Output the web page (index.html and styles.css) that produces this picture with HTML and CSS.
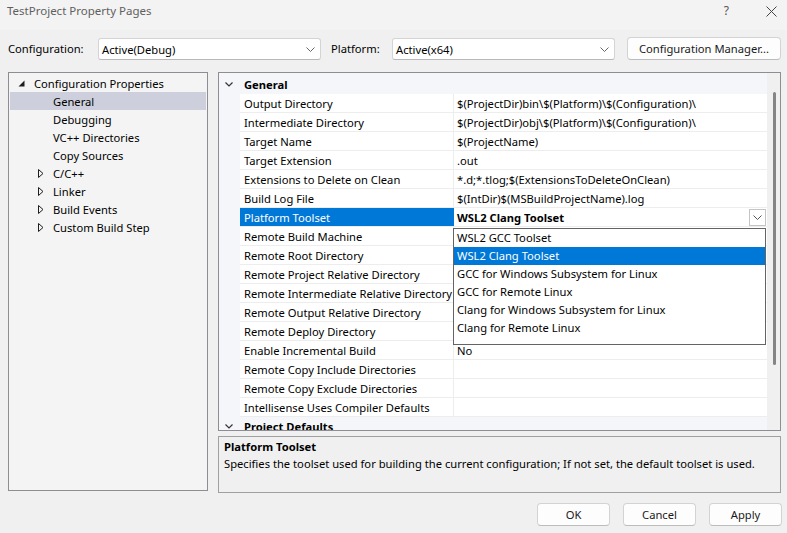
FILE: index.html
```html
<!DOCTYPE html>
<html lang="en">
<head>
    <meta charset="UTF-8">
    <title>TestProject Property Pages</title>
    <link rel="stylesheet" href="styles.css">
</head>
<body>
<div class="window">
    <div class="titlebar">
        <span class="title">TestProject Property Pages</span>
        <span class="caption-btn help">?</span>
        <span class="caption-btn close">
            <svg width="11" height="11" viewBox="0 0 11 11"><path d="M0.5 0.5 L10.5 10.5 M10.5 0.5 L0.5 10.5" stroke="#444" stroke-width="1" fill="none"/></svg>
        </span>
    </div>

    <div class="toolbar">
        <span class="field-label config-label">Configuration:</span>
        <div class="combo">
            <span>Active(Debug)</span>
            <svg class="chev" width="9" height="5" viewBox="0 0 9 5"><polyline points="0.5,0.5 4.5,4.5 8.5,0.5" stroke="#666" fill="none"/></svg>
        </div>
        <span class="field-label platform-label">Platform:</span>
        <div class="combo">
            <span>Active(x64)</span>
            <svg class="chev" width="9" height="5" viewBox="0 0 9 5"><polyline points="0.5,0.5 4.5,4.5 8.5,0.5" stroke="#666" fill="none"/></svg>
        </div>
        <button class="btn manager">Configuration Manager...</button>
    </div>

    <div class="main">
        <div class="tree">
            <div class="tree-row lvl0">
                <span class="twisty"><svg width="7" height="7" viewBox="0 0 7 7"><polygon points="6.5,0.5 6.5,6.5 0.5,6.5" fill="#1e1e1e"/></svg></span>
                <span>Configuration Properties</span>
            </div>
            <div class="tree-row lvl1 selected"><span class="twisty"></span><span>General</span></div>
            <div class="tree-row lvl1"><span class="twisty"></span><span>Debugging</span></div>
            <div class="tree-row lvl1"><span class="twisty"></span><span>VC++ Directories</span></div>
            <div class="tree-row lvl1"><span class="twisty"></span><span>Copy Sources</span></div>
            <div class="tree-row lvl1">
                <span class="twisty"><svg width="6" height="9" viewBox="0 0 6 9"><polygon points="0.5,0.5 5,4.5 0.5,8.5" stroke="#1e1e1e" fill="none"/></svg></span>
                <span>C/C++</span>
            </div>
            <div class="tree-row lvl1">
                <span class="twisty"><svg width="6" height="9" viewBox="0 0 6 9"><polygon points="0.5,0.5 5,4.5 0.5,8.5" stroke="#1e1e1e" fill="none"/></svg></span>
                <span>Linker</span>
            </div>
            <div class="tree-row lvl1">
                <span class="twisty"><svg width="6" height="9" viewBox="0 0 6 9"><polygon points="0.5,0.5 5,4.5 0.5,8.5" stroke="#1e1e1e" fill="none"/></svg></span>
                <span>Build Events</span>
            </div>
            <div class="tree-row lvl1">
                <span class="twisty"><svg width="6" height="9" viewBox="0 0 6 9"><polygon points="0.5,0.5 5,4.5 0.5,8.5" stroke="#1e1e1e" fill="none"/></svg></span>
                <span>Custom Build Step</span>
            </div>
        </div>

        <div class="right">
            <div class="grid">
                <div class="grid-rows">
                    <div class="cat">
                        <span class="cat-chev"><svg width="8" height="5" viewBox="0 0 8 5"><polyline points="0.5,0.5 4,4 7.5,0.5" stroke="#333" stroke-width="1.2" fill="none"/></svg></span>
                        <span>General</span>
                    </div>
                    <div class="row"><div class="name">Output Directory</div><div class="value">$(ProjectDir)bin\$(Platform)\$(Configuration)\</div></div>
                    <div class="row"><div class="name">Intermediate Directory</div><div class="value">$(ProjectDir)obj\$(Platform)\$(Configuration)\</div></div>
                    <div class="row"><div class="name">Target Name</div><div class="value">$(ProjectName)</div></div>
                    <div class="row"><div class="name">Target Extension</div><div class="value">.out</div></div>
                    <div class="row"><div class="name">Extensions to Delete on Clean</div><div class="value">*.d;*.tlog;$(ExtensionsToDeleteOnClean)</div></div>
                    <div class="row"><div class="name">Build Log File</div><div class="value">$(IntDir)$(MSBuildProjectName).log</div></div>
                    <div class="row active">
                        <div class="name">Platform Toolset</div>
                        <div class="value">
                            <span class="bold">WSL2 Clang Toolset</span>
                            <span class="drop-btn"><svg width="9" height="5" viewBox="0 0 9 5"><polyline points="0.5,0.5 4.5,4.5 8.5,0.5" stroke="#555" fill="none"/></svg></span>
                        </div>
                    </div>
                    <div class="row"><div class="name">Remote Build Machine</div><div class="value"></div></div>
                    <div class="row"><div class="name">Remote Root Directory</div><div class="value"></div></div>
                    <div class="row"><div class="name">Remote Project Relative Directory</div><div class="value"></div></div>
                    <div class="row"><div class="name">Remote Intermediate Relative Directory</div><div class="value"></div></div>
                    <div class="row"><div class="name">Remote Output Relative Directory</div><div class="value"></div></div>
                    <div class="row"><div class="name">Remote Deploy Directory</div><div class="value"></div></div>
                    <div class="row"><div class="name">Enable Incremental Build</div><div class="value">No</div></div>
                    <div class="row"><div class="name">Remote Copy Include Directories</div><div class="value"></div></div>
                    <div class="row"><div class="name">Remote Copy Exclude Directories</div><div class="value"></div></div>
                    <div class="row"><div class="name">Intellisense Uses Compiler Defaults</div><div class="value"></div></div>
                    <div class="cat">
                        <span class="cat-chev"><svg width="8" height="5" viewBox="0 0 8 5"><polyline points="0.5,0.5 4,4 7.5,0.5" stroke="#333" stroke-width="1.2" fill="none"/></svg></span>
                        <span>Project Defaults</span>
                    </div>
                </div>
                <div class="scrollbar"><div class="thumb"></div></div>

                <!-- open list of the Platform Toolset combo -->
                <div class="dropdown">
                    <div class="item">WSL2 GCC Toolset</div>
                    <div class="item picked">WSL2 Clang Toolset</div>
                    <div class="item">GCC for Windows Subsystem for Linux</div>
                    <div class="item">GCC for Remote Linux</div>
                    <div class="item">Clang for Windows Subsystem for Linux</div>
                    <div class="item">Clang for Remote Linux</div>
                </div>
            </div>
            <div class="desc">
                <div class="desc-title">Platform Toolset</div>
                <div>Specifies the toolset used for building the current configuration; If not set, the default toolset is used.</div>
            </div>
        </div>
    </div>

    <div class="footer">
        <button class="btn">OK</button>
        <button class="btn">Cancel</button>
        <button class="btn">Apply</button>
    </div>
</div>
</body>
</html>
```

FILE: styles.css
```css
body {
    margin: 0;
    padding: 0;
    background-color: #f0f0f0;
    font-family: "Noto Sans", "Open Sans", sans-serif;
    font-size: 11.2px;
    color: #000;
}
.window {
    width: 787px;
    height: 533px;
    overflow: hidden;
}

/* title bar */
.titlebar {
    height: 30px;
    background-color: #f3f3f3;
    display: flex;
    align-items: flex-start;
    line-height: 22px;
}
.title {
    padding-left: 7px;
    color: #606060;
    flex: 1;
    font-size: 11.5px;
}
.caption-btn {
    color: #555;
    display: flex;
    align-items: center;
    height: 22px;
}
.help {
    margin-right: 37px;
    font-size: 12px;
}
.close {
    margin-right: 10px;
}

/* configuration row */
.toolbar {
    height: 42px;
    box-sizing: border-box;
    padding: 7px 0 0 8px;
    display: flex;
    align-items: flex-start;
}
.field-label {
    line-height: 22px;
    margin-top: 1px;
}
.config-label {
    width: 90px;
}
.platform-label {
    width: 61px;
    margin-left: 10px;
}
.combo {
    width: 223px;
    height: 22px;
    box-sizing: border-box;
    margin-top: 1px;
    background-color: #fff;
    border: 1px solid #d4d4d4;
    border-bottom-color: #b8b8b8;
    border-radius: 3px;
    display: flex;
    align-items: center;
    padding: 0 5px 0 3px;
}
.combo span {
    flex: 1;
}
.btn {
    font-family: inherit;
    font-size: 11.2px;
    color: #1a1a1a;
    background-color: #fdfdfd;
    border: 1px solid #d3d3d3;
    border-bottom-color: #bcbcbc;
    border-radius: 4px;
    height: 23px;
    padding: 0;
}
.manager {
    width: 154px;
    margin-left: 12px;
}

/* main area */
.main {
    display: flex;
    padding-left: 8px;
}
.tree {
    width: 200px;
    height: 419px;
    box-sizing: border-box;
    border: 1px solid #8d8d93;
    background-color: #f4f4f4;
    padding-top: 1px;
}
.tree-row {
    height: 18px;
    display: flex;
    align-items: center;
    margin: 0 1px;
}
.tree-row.lvl0 {
    padding-left: 8px;
}
.tree-row.lvl1 {
    padding-left: 27px;
}
.tree-row.selected {
    background-color: #cdd0dc;
}
.twisty {
    width: 16px;
    display: flex;
    align-items: center;
}
.lvl1 .twisty svg {
    margin-left: 1px;
}

.right {
    width: 563px;
    margin-left: 10px;
}
.grid {
    position: relative;
    height: 359px;
    box-sizing: border-box;
    border: 1px solid #8d8d93;
    display: flex;
    background-color: #f5f6f9;
}
.grid-rows {
    flex: 1;
    padding-top: 2px;
    overflow: hidden;
}
.cat {
    height: 19px;
    display: flex;
    align-items: center;
    font-weight: bold;
}
.cat-chev {
    width: 25px;
    display: flex;
    padding-left: 6px;
    box-sizing: border-box;
}
.row {
    height: 19px;
    box-sizing: border-box;
    margin-left: 21px;
    display: flex;
    background-color: #fff;
    border-bottom: 1px solid #ededed;
}
.name {
    width: 214px;
    box-sizing: border-box;
    padding-left: 4px;
    border-right: 1px solid #ededed;
    line-height: 19px;
    white-space: nowrap;
}
.value {
    flex: 1;
    padding-left: 3px;
    line-height: 19px;
    display: flex;
    align-items: center;
    white-space: nowrap;
}
.row.active .name {
    background-color: #0078d7;
    color: #fff;
    border-right-color: #0078d7;
}
.bold {
    font-weight: bold;
    flex: 1;
}
.drop-btn {
    width: 17px;
    height: 17px;
    box-sizing: border-box;
    border: 1px solid #c4c4c4;
    background-color: #fff;
    display: flex;
    align-items: center;
    justify-content: center;
    margin-right: 1px;
}
.scrollbar {
    width: 13px;
    background-color: #f0f0f0;
    padding-left: 6px;
    box-sizing: border-box;
}
.thumb {
    width: 3px;
    height: 273px;
    margin-top: 19px;
    background-color: #858585;
    border-radius: 2px;
}
.dropdown {
    position: absolute;
    left: 234px;
    top: 155px;
    width: 313px;
    height: 117px;
    box-sizing: border-box;
    border: 1px solid #646464;
    background-color: #fff;
}
.item {
    height: 18px;
    line-height: 18px;
    padding-left: 3px;
}
.item.picked {
    background-color: #0078d7;
    color: #fff;
}

.desc {
    margin-top: 5px;
    height: 57px;
    box-sizing: border-box;
    border: 1px solid #a0a0a0;
    padding: 0 5px;
    line-height: 17px;
}
.desc-title {
    font-weight: bold;
    margin-top: 1px;
}

.footer {
    display: flex;
    justify-content: flex-end;
    gap: 13px;
    padding: 10px 5px 0 0;
}
.footer .btn {
    width: 73px;
}
```
